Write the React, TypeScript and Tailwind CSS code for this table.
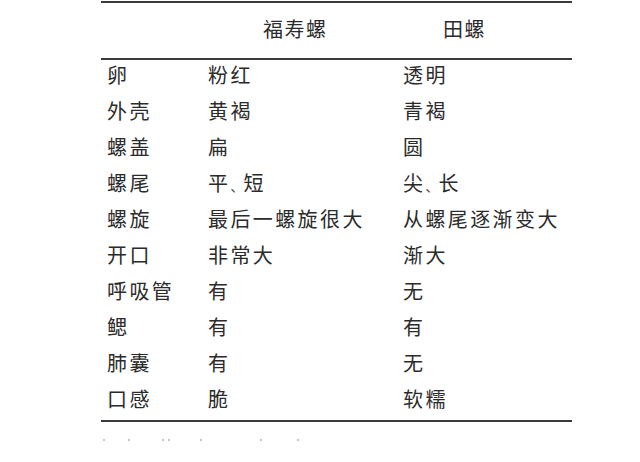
const ROWS: Array<[string, string, string]> = [
  ['卵', '粉红', '透明'],
  ['外壳', '黄褐', '青褐'],
  ['螺盖', '扁', '圆'],
  ['螺尾', '平、短', '尖、长'],
  ['螺旋', '最后一螺旋很大', '从螺尾逐渐变大'],
  ['开口', '非常大', '渐大'],
  ['呼吸管', '有', '无'],
  ['鳃', '有', '有'],
  ['肺囊', '有', '无'],
  ['口感', '脆', '软糯'],
]

// faint specks left over from the cropped line below the table
const SPECKS = [2, 27, 61, 67, 99, 159, 196]

// the enumeration comma is set narrow in the source
function Cell({ text }: { text: string }) {
  const parts = text.split('、')
  return (
    <>
      {parts.map((part, i) => (
        <span key={i}>
          {i > 0 && <span className="text-[13px] tracking-normal">、</span>}
          {part}
        </span>
      ))}
    </>
  )
}

export default function App() {
  return (
    <div
      className="h-[462px] w-[640px] overflow-hidden bg-white text-[#2b2b2b]"
      style={{ fontFamily: '"Noto Sans CJK SC", "Noto Sans", sans-serif' }}
    >
      <div className="ml-[101px] mt-px w-[471px]">
        <div className="border-t-2 border-[#3a3a3a]" />
        <div className="grid h-[55px] grid-cols-[107px_195px_1fr] items-center pb-[3px] text-[20px] tracking-[1.5px]">
          <div />
          <div className="pl-[55px]">福寿螺</div>
          <div className="pl-[40px]">田螺</div>
        </div>
        <div className="border-t-2 border-[#3a3a3a]" />
        <div className="flex flex-col">
          {ROWS.map(([name, fushou, tian]) => (
            <div key={name} className="grid h-9 grid-cols-[107px_195px_1fr] text-[20px] leading-[30px] tracking-[2.4px]">
              <div className="pl-[6px]">{name}</div>
              <div><Cell text={fushou} /></div>
              <div><Cell text={tian} /></div>
            </div>
          ))}
        </div>
        <div className="border-t-2 border-[#3a3a3a]" />
        <div className="relative mt-[17px] h-[3px]">
          {SPECKS.map(x => (
            <span key={x} className="absolute top-0 h-[2px] w-[2px] bg-[#c4c4c4]" style={{ left: x }} />
          ))}
        </div>
      </div>
    </div>
  )
}
